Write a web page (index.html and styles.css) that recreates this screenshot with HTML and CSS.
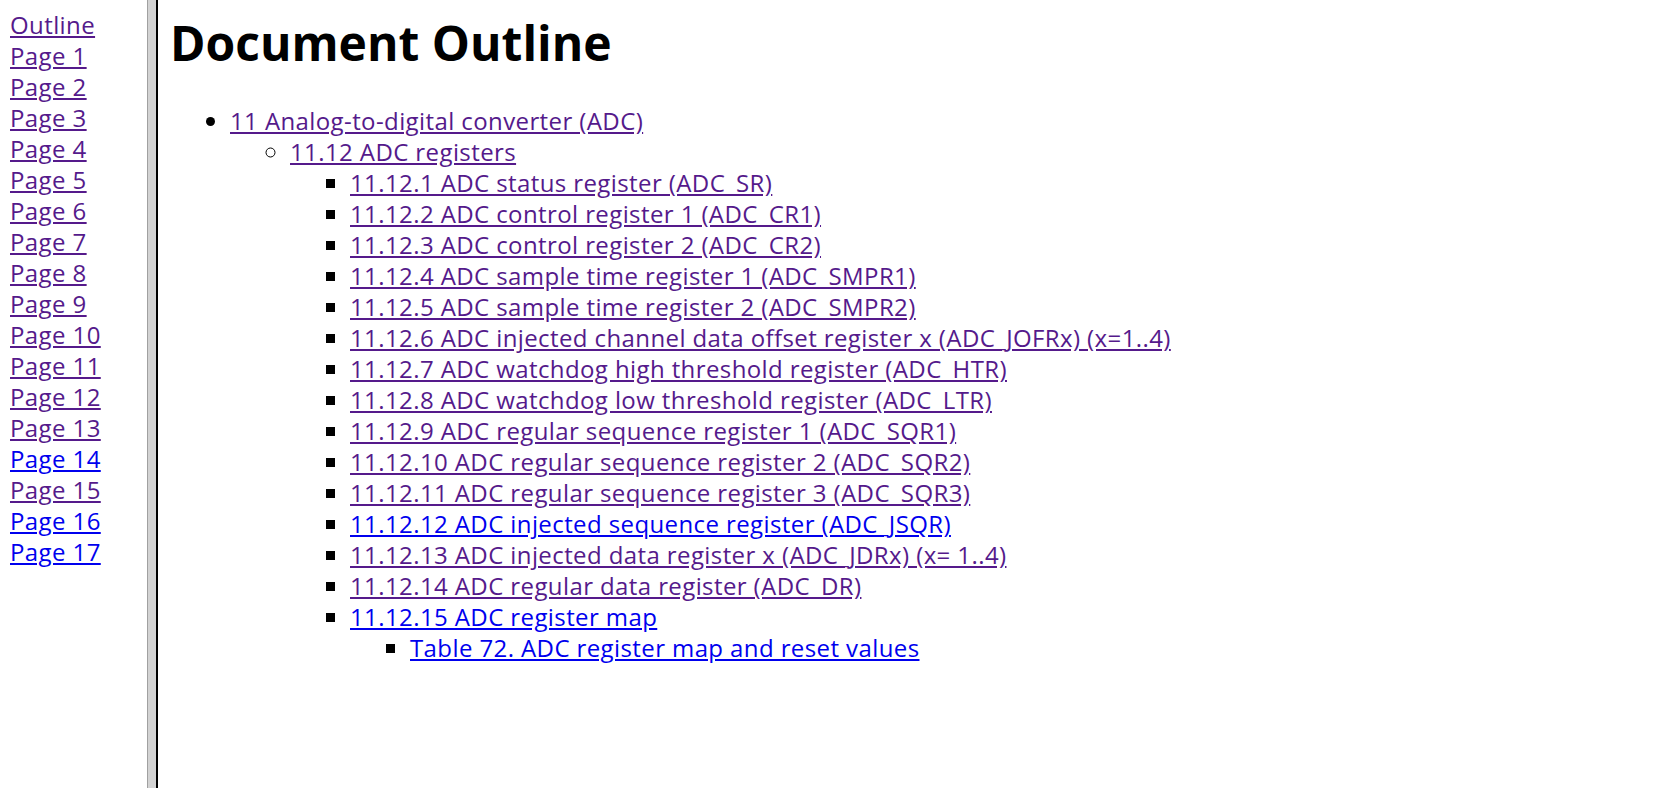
FILE: index.html
```html
<!DOCTYPE html>
<html>
<head>
<meta charset="utf-8">
<title>Document Outline</title>
<link rel="stylesheet" href="styles.css">
</head>
<body>
<div class="frameset">
  <nav class="side">
    <a class="v" href="#outline">Outline</a>
    <a class="v" href="#p1">Page 1</a>
    <a class="v" href="#p2">Page 2</a>
    <a class="v" href="#p3">Page 3</a>
    <a class="v" href="#p4">Page 4</a>
    <a class="v" href="#p5">Page 5</a>
    <a class="v" href="#p6">Page 6</a>
    <a class="v" href="#p7">Page 7</a>
    <a class="v" href="#p8">Page 8</a>
    <a class="v" href="#p9">Page 9</a>
    <a class="v" href="#p10">Page 10</a>
    <a class="v" href="#p11">Page 11</a>
    <a class="v" href="#p12">Page 12</a>
    <a class="v" href="#p13">Page 13</a>
    <a class="u" href="#p14">Page 14</a>
    <a class="v" href="#p15">Page 15</a>
    <a class="u" href="#p16">Page 16</a>
    <a class="u" href="#p17">Page 17</a>
  </nav>
  <div class="divider"></div>
  <main class="content">
    <h1 class="title">Document Outline</h1>
    <ul class="l1">
      <li><a class="v" href="#s11">11 Analog-to-digital converter (ADC)</a>
        <ul class="l2">
          <li><a class="v" href="#s1112">11.12 ADC registers</a>
            <ul class="l3">
              <li><a class="v" href="#r1">11.12.1 ADC status register (ADC_SR)</a></li>
              <li><a class="v" href="#r2">11.12.2 ADC control register 1 (ADC_CR1)</a></li>
              <li><a class="v" href="#r3">11.12.3 ADC control register 2 (ADC_CR2)</a></li>
              <li><a class="v" href="#r4">11.12.4 ADC sample time register 1 (ADC_SMPR1)</a></li>
              <li><a class="v" href="#r5">11.12.5 ADC sample time register 2 (ADC_SMPR2)</a></li>
              <li><a class="v" href="#r6">11.12.6 ADC injected channel data offset register x (ADC_JOFRx) (x=1..4)</a></li>
              <li><a class="v" href="#r7">11.12.7 ADC watchdog high threshold register (ADC_HTR)</a></li>
              <li><a class="v" href="#r8">11.12.8 ADC watchdog low threshold register (ADC_LTR)</a></li>
              <li><a class="v" href="#r9">11.12.9 ADC regular sequence register 1 (ADC_SQR1)</a></li>
              <li><a class="v" href="#r10">11.12.10 ADC regular sequence register 2 (ADC_SQR2)</a></li>
              <li><a class="v" href="#r11">11.12.11 ADC regular sequence register 3 (ADC_SQR3)</a></li>
              <li><a class="u" href="#r12">11.12.12 ADC injected sequence register (ADC_JSQR)</a></li>
              <li><a class="v" href="#r13">11.12.13 ADC injected data register x (ADC_JDRx) (x= 1..4)</a></li>
              <li><a class="v" href="#r14">11.12.14 ADC regular data register (ADC_DR)</a></li>
              <li><a class="u" href="#r15">11.12.15 ADC register map</a>
                <ul class="l4">
                  <li><a class="u" href="#t72">Table 72. ADC register map and reset values</a></li>
                </ul>
              </li>
            </ul>
          </li>
        </ul>
      </li>
    </ul>
  </main>
</div>
</body>
</html>
```

FILE: styles.css
```css
html, body {
  margin: 0;
  height: 100%;
  background: #fff;
}
body {
  font-family: "Open Sans", "Noto Sans", sans-serif;
  overflow: hidden;
}
.frameset {
  display: flex;
  height: 100%;
}
.side {
  width: 137px;
  flex: none;
  padding: 9px 0 0 10px;
  display: flex;
  flex-direction: column;
  align-items: flex-start;
  font-size: 24px;
  line-height: 31px;
  letter-spacing: 0.4px;
}
.divider {
  flex: none;
  width: 8px;
  background: #d3d3d3;
  border-left: 1px solid #a0a0a0;
  border-right: 2px solid #000;
}
.content {
  flex: 1;
  padding: 12px 12px 0 12px;
  font-size: 24px;
  line-height: 31px;
  letter-spacing: 0.4px;
}
a.v { color: #551a8b; }
a.u { color: #0000ee; }
.title {
  margin: 0 0 31px 0;
  font-size: 48px;
  line-height: 62px;
  font-weight: 700;
  letter-spacing: 0;
  color: #000;
}
ul {
  margin: 0;
  padding-left: 60px;
}
.l1 { list-style-type: disc; }
.l2 { list-style-type: circle; }
.l3, .l4 { list-style-type: square; }
```
